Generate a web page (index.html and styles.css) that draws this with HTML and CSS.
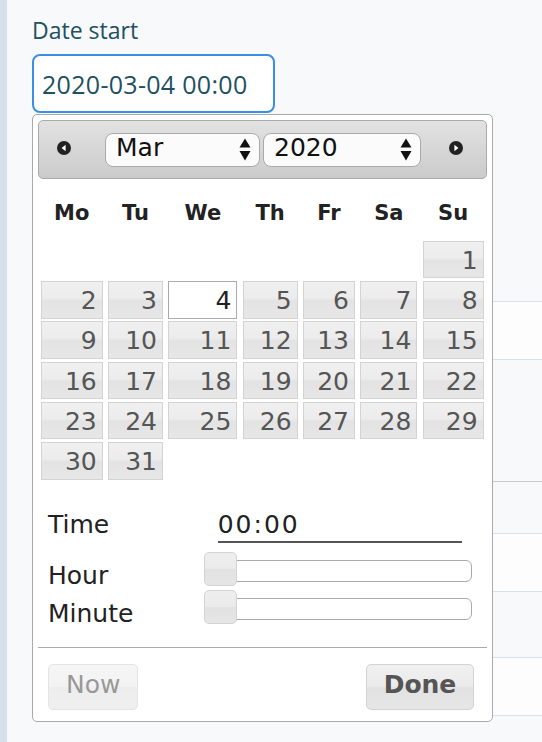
FILE: index.html
```html
<!DOCTYPE html>
<html lang="en">
<head>
    <meta charset="UTF-8">
    <meta name="viewport" content="width=device-width, initial-scale=1.0">
    <title>Date start</title>
    <link rel="stylesheet" href="styles.css">
</head>
<body>
    <div class="layout">
        <aside class="rail"></aside>

        <main class="content">
            <div class="field">
                <label class="field-label" for="dateStart">Date start</label>
                <input id="dateStart" class="field-input" type="text" value="2020-03-04 00:00">

                <!-- datepicker popup -->
                <div class="datepicker">
                    <div class="dp-header">
                        <a class="dp-nav dp-prev" title="Prev">
                            <svg width="14" height="14" viewBox="0 0 14 14"><circle cx="7" cy="7" r="7" fill="#222"/><polygon points="8.6,3.8 8.6,10.2 4.6,7" fill="#fff"/></svg>
                        </a>
                        <div class="dp-select dp-month">
                            <span>Mar</span>
                            <svg width="12" height="23" viewBox="0 0 12 23"><polygon points="0.5,9.5 6,0.5 11.5,9.5" fill="#111"/><polygon points="0.5,13 11.5,13 6,22.5" fill="#111"/></svg>
                        </div>
                        <div class="dp-select dp-year">
                            <span>2020</span>
                            <svg width="12" height="23" viewBox="0 0 12 23"><polygon points="0.5,9.5 6,0.5 11.5,9.5" fill="#111"/><polygon points="0.5,13 11.5,13 6,22.5" fill="#111"/></svg>
                        </div>
                        <a class="dp-nav dp-next" title="Next">
                            <svg width="14" height="14" viewBox="0 0 14 14"><circle cx="7" cy="7" r="7" fill="#222"/><polygon points="5.4,3.8 5.4,10.2 9.4,7" fill="#fff"/></svg>
                        </a>
                    </div>

                    <div class="dp-calendar">
                        <span class="dp-dow">Mo</span>
                        <span class="dp-dow">Tu</span>
                        <span class="dp-dow">We</span>
                        <span class="dp-dow">Th</span>
                        <span class="dp-dow">Fr</span>
                        <span class="dp-dow">Sa</span>
                        <span class="dp-dow">Su</span>

                        <span></span><span></span><span></span><span></span><span></span><span></span>
                        <a class="dp-day">1</a>

                        <a class="dp-day">2</a>
                        <a class="dp-day">3</a>
                        <a class="dp-day is-active">4</a>
                        <a class="dp-day">5</a>
                        <a class="dp-day">6</a>
                        <a class="dp-day">7</a>
                        <a class="dp-day">8</a>

                        <a class="dp-day">9</a>
                        <a class="dp-day">10</a>
                        <a class="dp-day">11</a>
                        <a class="dp-day">12</a>
                        <a class="dp-day">13</a>
                        <a class="dp-day">14</a>
                        <a class="dp-day">15</a>

                        <a class="dp-day">16</a>
                        <a class="dp-day">17</a>
                        <a class="dp-day">18</a>
                        <a class="dp-day">19</a>
                        <a class="dp-day">20</a>
                        <a class="dp-day">21</a>
                        <a class="dp-day">22</a>

                        <a class="dp-day">23</a>
                        <a class="dp-day">24</a>
                        <a class="dp-day">25</a>
                        <a class="dp-day">26</a>
                        <a class="dp-day">27</a>
                        <a class="dp-day">28</a>
                        <a class="dp-day">29</a>

                        <a class="dp-day">30</a>
                        <a class="dp-day">31</a>
                    </div>

                    <div class="dp-time">
                        <span class="dp-label dp-row-time">Time</span>
                        <span class="dp-time-value">00:00</span>

                        <span class="dp-label dp-row-hour">Hour</span>
                        <div class="dp-slider dp-row-hour"><span class="dp-handle"></span></div>

                        <span class="dp-label dp-row-minute">Minute</span>
                        <div class="dp-slider dp-row-minute"><span class="dp-handle"></span></div>
                    </div>

                    <div class="dp-buttons">
                        <button class="dp-btn dp-now" disabled>Now</button>
                        <button class="dp-btn dp-done">Done</button>
                    </div>
                </div>
            </div>

            <!-- rows of the list under the popup -->
            <div class="list">
                <div class="list-row is-white row-a"></div>
                <div class="list-row row-b"></div>
                <div class="list-row is-group row-c"></div>
                <div class="list-row is-white row-a"></div>
                <div class="list-row row-d"></div>
                <div class="list-row is-white row-a"></div>
            </div>
        </main>
    </div>
</body>
</html>
```

FILE: styles.css
```css
* {
    box-sizing: border-box;
}

body {
    margin: 0;
    background-color: #f8f9fb;
    font-family: "Open Sans", sans-serif;
    color: #21505f;
}

.layout {
    display: flex;
    min-height: 742px;
}

.rail {
    width: 7px;
    flex-shrink: 0;
    background-color: #d6e0ea;
}

.content {
    flex: 1;
    padding: 14px 0 0 25px;
}

.field {
    position: relative;
    width: 243px;
}

.field-label {
    display: block;
    font-size: 23px;
    line-height: 32px;
}

.field-input {
    display: block;
    width: 243px;
    height: 59px;
    margin-top: 8px;
    padding: 0 8px;
    border: 2px solid #3a8ee6;
    border-radius: 8px;
    background: #fff;
    font-family: "Open Sans", sans-serif;
    font-size: 25px;
    letter-spacing: 0.3px;
    color: #21505f;
    outline: none;
}

/* datepicker */

.datepicker {
    position: absolute;
    top: calc(100% + 1px);
    left: 0;
    z-index: 2;
    width: 461px;
    padding: 5px;
    border: 1px solid #aaa;
    border-radius: 5px;
    background: #fff;
    font-family: "DejaVu Sans", sans-serif;
    color: #222;
}

.dp-header {
    display: flex;
    align-items: center;
    height: 59px;
    border: 1px solid #aaa;
    border-radius: 5px;
    background: linear-gradient(#e2e2e2, #cbcbcb);
}

.dp-nav {
    display: block;
    width: 14px;
    height: 14px;
    margin-top: -4px;
}

.dp-nav svg {
    display: block;
}

.dp-prev {
    margin-left: 18px;
}

.dp-next {
    margin-left: 28px;
}

.dp-select {
    display: flex;
    align-items: center;
    justify-content: space-between;
    height: 34px;
    padding: 0 8px 4px 10px;
    border: 1px solid #aaa;
    border-radius: 8px;
    background: #fbfbfb;
    font-size: 25px;
    color: #111;
}

.dp-select svg {
    margin-top: 4px;
}

.dp-month {
    width: 155px;
    margin-left: 34px;
}

.dp-year {
    width: 158px;
    margin-left: 3px;
}

.dp-calendar {
    display: grid;
    grid-template-columns: 62px 55px 69px 55px 52px 57px 61px;
    grid-template-rows: 59px;
    grid-auto-rows: 37.5px;
    column-gap: 5.33px;
    row-gap: 2.8px;
    margin-left: 2.7px;
}

.dp-dow {
    padding-top: 22px;
    font-size: 21px;
    font-weight: bold;
    line-height: 24px;
    text-align: center;
    color: #222;
}

.dp-day {
    padding: 2px 5px 0 0;
    border: 1px solid #d3d3d3;
    background: linear-gradient(#f0f0f0 0%, #ececec 45%, #e3e3e3 52%, #e7e7e7 100%);
    font-size: 25px;
    line-height: 33px;
    text-align: right;
    color: #555;
    cursor: pointer;
}

.dp-day.is-active {
    border-color: #aaa;
    background: #fff;
    color: #212121;
}

/* time */

.dp-time {
    display: grid;
    grid-template-columns: 167px 267px;
    grid-template-rows: 35px 41px 38px;
    align-items: start;
    padding-top: 30px;
    font-size: 25px;
    color: #222;
}

.dp-label {
    padding-left: 10px;
    line-height: 29px;
}

.dp-time-value {
    width: 244px;
    margin-left: 12.7px;
    padding-bottom: 2px;
    border-bottom: 2px solid #555;
    line-height: 29px;
    letter-spacing: 2px;
}

.dp-label.dp-row-hour {
    margin-top: 16px;
}

.dp-label.dp-row-minute {
    margin-top: 13px;
}

.dp-slider {
    position: relative;
    height: 22px;
    border: 1px solid #aaa;
    border-radius: 6px;
    background: #fff;
}

.dp-slider.dp-row-hour {
    margin-top: 15px;
}

.dp-slider.dp-row-minute {
    margin-top: 12px;
}

.dp-handle {
    position: absolute;
    top: -9px;
    left: -2px;
    width: 33px;
    height: 34px;
    border: 1px solid #d3d3d3;
    border-radius: 5px;
    background: linear-gradient(#eeeeee 0%, #ebebeb 48%, #e2e2e2 52%, #e6e6e6 100%);
}

.dp-buttons {
    display: flex;
    justify-content: space-between;
    margin-top: 23px;
    padding: 16px 12.7px 6px 10px;
    border-top: 1px solid #aaa;
}

.dp-btn {
    height: 46px;
    padding: 0 17px 4px;
    border: 1px solid #d3d3d3;
    border-radius: 5px;
    background: linear-gradient(#f0f0f0 0%, #ebebeb 48%, #e2e2e2 52%, #e6e6e6 100%);
    font-family: "DejaVu Sans", sans-serif;
    font-size: 25px;
    color: #555;
}

.dp-done {
    font-weight: bold;
}

.dp-now {
    opacity: 0.6;
}

/* list behind the popup */

.list {
    margin-top: 188px;
    border-bottom: 1px solid #d6e2f0;
}

.list-row {
    border-top: 1px solid #d6e2f0;
}

.list-row.is-white {
    background-color: #fdfdfe;
}

.list-row.is-group {
    border-top-color: #c8c8c8;
}

.row-a {
    height: 58px;
}

.row-b {
    height: 122px;
}

.row-c {
    height: 52px;
}

.row-d {
    height: 66px;
}
```
